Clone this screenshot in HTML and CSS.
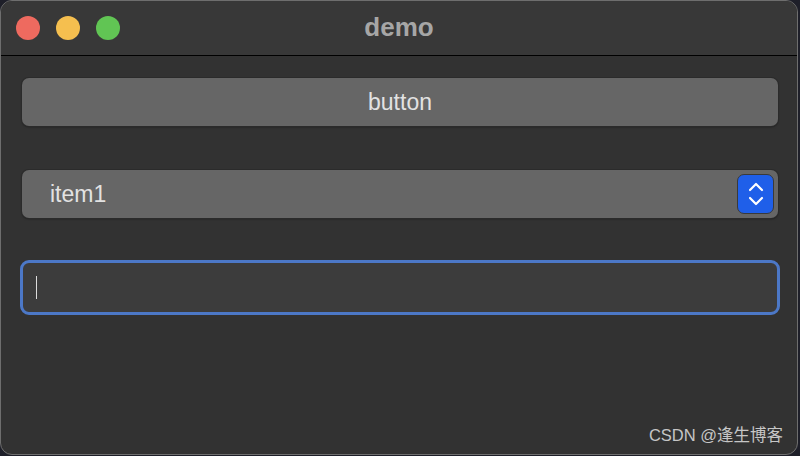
FILE: index.html
```html
<!DOCTYPE html>
<html lang="en">
<head>
    <meta charset="UTF-8">
    <title>demo</title>
    <link rel="stylesheet" href="styles.css">
</head>
<body>

    <!-- Window -->
    <div class="window">
        <div class="titlebar">
            <div class="lights">
                <span class="light red"></span>
                <span class="light yellow"></span>
                <span class="light green"></span>
            </div>
            <div class="title">demo</div>
        </div>

        <div class="content">
            <div class="btn">button</div>

            <div class="combo">
                <span class="combo-text">item1</span>
                <span class="stepper">
                    <svg width="16" height="26" viewBox="0 0 16 26">
                        <polyline points="2,9 8,3 14,9" fill="none" stroke="#fff" stroke-width="2.2" stroke-linecap="round" stroke-linejoin="round"/>
                        <polyline points="2,17 8,23 14,17" fill="none" stroke="#fff" stroke-width="2.2" stroke-linecap="round" stroke-linejoin="round"/>
                    </svg>
                </span>
            </div>

            <div class="field"><span class="caret"></span></div>

            <div class="watermark">CSDN @逢生博客</div>
        </div>
    </div>

</body>
</html>
```

FILE: styles.css
```css
body {
    margin: 0;
    background: #1e1f29;
    font-family: "Liberation Sans", Arial, "Noto Sans CJK SC", sans-serif;
}

.window {
    box-sizing: border-box;
    width: 798px;
    height: 455px;
    margin-left: 0;
    border: 1px solid #6e6e6e;
    border-radius: 12px;
    overflow: hidden;
    background: #323232;
    display: flex;
    flex-direction: column;
}

.titlebar {
    height: 54px;
    background: #383838;
    border-bottom: 1px solid #000;
    display: flex;
    align-items: center;
    position: relative;
}

.lights {
    display: flex;
    gap: 16px;
    padding-left: 15px;
}

.light {
    width: 24px;
    height: 24px;
    border-radius: 50%;
}

.red { background: #ee6a5f; }
.yellow { background: #f5bf4f; }
.green { background: #61c554; }

.title {
    position: absolute;
    left: 0;
    right: 0;
    text-align: center;
    font-size: 26px;
    font-weight: bold;
    color: #a6a6a6;
    top: 11px;
}

.content {
    flex: 1;
    display: flex;
    flex-direction: column;
    padding: 22px 19px 0 21px;
}

.btn {
    height: 48px;
    box-sizing: border-box;
    border-radius: 7px;
    background: #666;
    box-shadow: 0 0 0 1px #2b2b2b, 0 1px 2px rgba(0, 0, 0, 0.5);
    color: #e2e2e2;
    font-size: 23px;
    display: flex;
    align-items: center;
    justify-content: center;
}

.combo {
    margin-top: 44px;
    height: 48px;
    border-radius: 7px;
    background: #666;
    box-shadow: 0 0 0 1px #2b2b2b, 0 1px 2px rgba(0, 0, 0, 0.5);
    display: flex;
    align-items: center;
    justify-content: space-between;
    padding: 0 4px 0 28px;
}

.combo-text {
    color: #e2e2e2;
    font-size: 23px;
}

.stepper {
    box-sizing: border-box;
    width: 37px;
    height: 40px;
    border-radius: 7px;
    background: #1f5fe9;
    border: 1px solid #3a3a3a;
    display: flex;
    align-items: center;
    justify-content: center;
}

.field {
    margin: 42px -2px 0 -2px;
    height: 55px;
    box-sizing: border-box;
    border: 3px solid #4c78c7;
    border-radius: 9px;
    background: #3c3c3c;
    display: flex;
    align-items: center;
    padding-left: 13px;
}

.caret {
    width: 1px;
    height: 23px;
    background: #dcdcdc;
}

.watermark {
    margin-top: auto;
    align-self: flex-end;
    margin-right: -5px;
    padding-bottom: 8px;
    font-size: 16.5px;
    color: #c6c6c6;
}
```
